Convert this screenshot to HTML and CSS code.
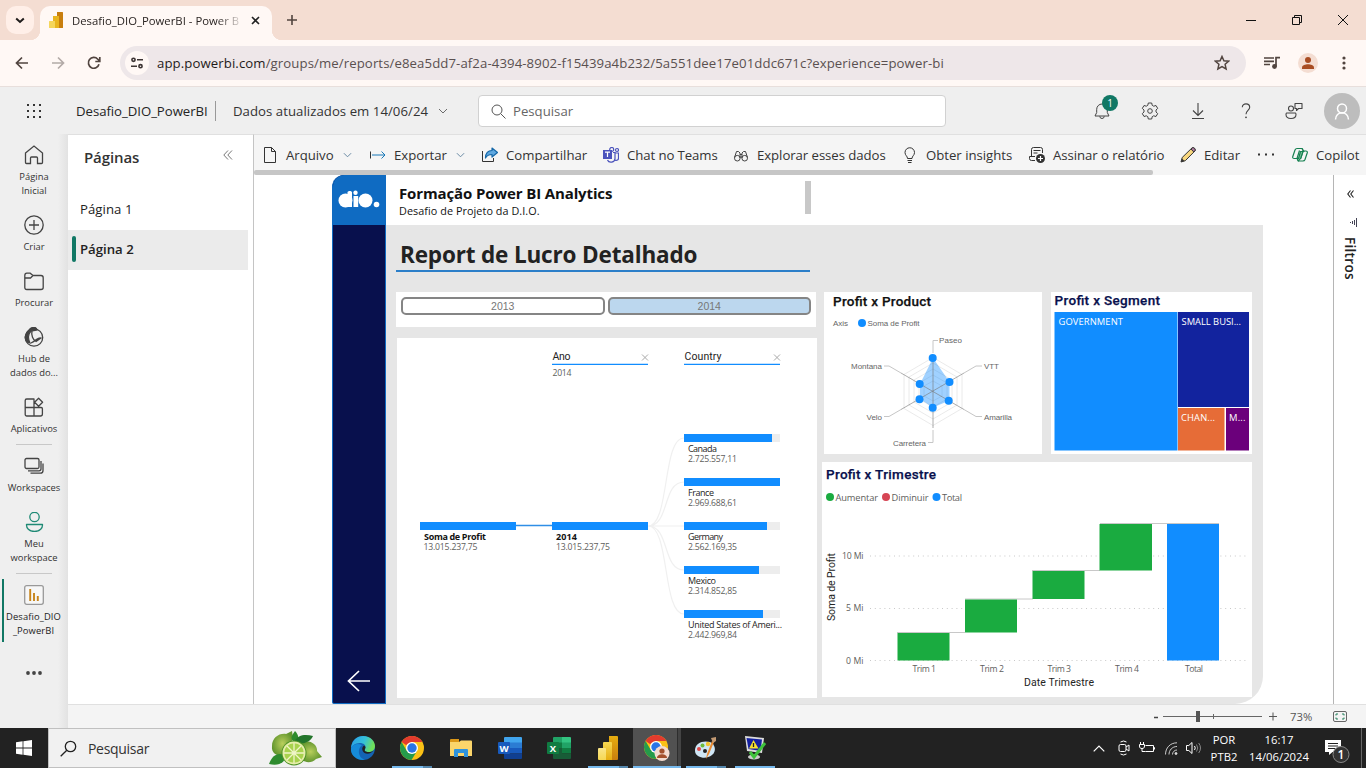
FILE: index.html
```html
<!DOCTYPE html>
<html lang="pt-BR">
<head>
<meta charset="utf-8">
<title>Desafio_DIO_PowerBI - Power BI</title>
<link rel="stylesheet" href="styles.css">
</head>
<body>
<svg class="defs" width="0" height="0">
  <defs>
    <linearGradient id="gold1" x1="0" y1="0" x2="0" y2="1"><stop offset="0" stop-color="#e6ad10"/><stop offset="1" stop-color="#c87e0e"/></linearGradient>
    <linearGradient id="gold2" x1="0" y1="0" x2="0" y2="1"><stop offset="0" stop-color="#f6d751"/><stop offset="1" stop-color="#e6ad10"/></linearGradient>
    <linearGradient id="gold3" x1="0" y1="0" x2="0" y2="1"><stop offset="0" stop-color="#f9e589"/><stop offset="1" stop-color="#f6d751"/></linearGradient>
    <linearGradient id="edgeTop" x1="0" y1="0" x2="1" y2="0.3"><stop offset="0" stop-color="#2a9ce8"/><stop offset="0.6" stop-color="#35c1d8"/><stop offset="1" stop-color="#6fe05a"/></linearGradient>
    <radialGradient id="lime"><stop offset="0" stop-color="#b9cf5c"/><stop offset="1" stop-color="#63962f"/></radialGradient>
    <symbol id="pbi" viewBox="0 0 20 24">
      <path d="M11 0h8a1 1 0 0 1 1 1v22a1 1 0 0 1-1 1h-8z" fill="url(#gold1)"/>
      <path d="M6 6h7a1 1 0 0 1 1 1v17H5V7a1 1 0 0 1 1-1z" fill="url(#gold2)"/>
      <path d="M1 12h6a1 1 0 0 1 1 1v11H1a1 1 0 0 1-1-1V13a1 1 0 0 1 1-1z" fill="url(#gold3)"/>
    </symbol>
    <symbol id="chrome" viewBox="0 0 24 24">
      <circle cx="12" cy="12" r="12" fill="#fbc116"/>
      <path d="M1.6 6A12 12 0 0 0 11.500 24L17 15 12 12 6.800 15z" fill="#259b4b"/>
      <path d="M1.6 6A12 12 0 0 1 22.400 6H12L6 9z" fill="#e33b2e"/>
      <circle cx="12" cy="12" r="6" fill="#fff"/><circle cx="12" cy="12" r="4.700" fill="#2a75e6"/>
    </symbol>
    <symbol id="chev" viewBox="0 0 10 6"><path d="M1 1l4 4 4-4" fill="none" stroke="#6b6b6b"/></symbol>
    <symbol id="chevBlue" viewBox="0 0 10 6"><path d="M1 1l4 4 4-4" fill="none" stroke="#5b7f9c"/></symbol>
  </defs>
</svg>

<header class="tabstrip">
  <button class="tab-search"><svg width="10" height="7" viewBox="0 0 10 7"><path d="M1.200 1.500L5 5l3.800-3.500" fill="none" stroke="#1f1b1a" stroke-width="2"/></svg></button>
  <div class="tab">
    <svg class="tab-icon" width="14" height="16" viewBox="0 0 14 16"><path d="M8 0h5.500a.5.500 0 0 1 .5.500v15a.5.500 0 0 1-.5.500H8z" fill="#c87e0e"/><path d="M4 4h6v12H4z" fill="#e9b520"/><path d="M.5 9H6v7H.5a.5.500 0 0 1-.5-.5v-6A.5.500 0 0 1 .5 9z" fill="#f5d65c"/></svg>
    <span class="tab-title">Desafio_DIO_PowerBI - Power B</span>
    <svg class="tab-close" width="9" height="9" viewBox="0 0 9 9"><path d="M1 1l7 7M8 1L1 8" stroke="#222" stroke-width="1.600"/></svg>
  </div>
  <svg class="tab-new" width="12" height="12" viewBox="0 0 12 12"><path d="M6 1v10M1 6h10" stroke="#51443f" stroke-width="1.600"/></svg>
  <div class="window-buttons">
    <svg width="46" height="40" viewBox="0 0 46 40"><path d="M18 20.500h10" stroke="#111"/></svg>
    <svg width="46" height="40" viewBox="0 0 46 40"><path d="M18.500 17.500h7v7h-7zM20.500 17.500v-2h7v7h-2" fill="none" stroke="#111"/></svg>
    <svg width="46" height="40" viewBox="0 0 46 40"><path d="M18 15l10 10M28 15L18 25" stroke="#111"/></svg>
  </div>
</header>

<nav class="browserbar">
  <svg class="nav-btn" width="14" height="14" viewBox="0 0 14 14"><path d="M13 7H2M7 1.500L1.500 7 7 12.500" fill="none" stroke="#51443f" stroke-width="1.700"/></svg>
  <svg class="nav-btn" width="14" height="14" viewBox="0 0 14 14"><path d="M1 7h11M7 1.500L12.500 7 7 12.500" fill="none" stroke="#b3aaa7" stroke-width="1.700"/></svg>
  <svg class="nav-btn" width="14" height="14" viewBox="0 0 14 14"><path d="M12 8.300A5.400 5.400 0 1 1 10.800 3.200L12.500 5M12.800 1v4.500H8.300" fill="none" stroke="#51443f" stroke-width="1.700"/></svg>
  <div class="omnibox">
    <span class="site-info"><svg width="14" height="12" viewBox="0 0 14 12"><g fill="none" stroke="#3c3433" stroke-width="1.600"><circle cx="3.500" cy="2.800" r="1.600"/><path d="M7 2.800h6M1 9.200h6"/><circle cx="10.500" cy="9.200" r="1.600"/></g></svg></span>
    <span class="url"><b>app.powerbi.com</b>/groups/me/reports/e8ea5dd7-af2a-4394-8902-f15439a4b232/5a551dee17e01ddc671c?experience=power-bi</span>
    <svg class="star" width="16" height="16" viewBox="0 0 16 16"><path d="M8 1.500l1.900 4.300 4.700.4-3.500 3.100 1 4.600L8 11.500l-4.100 2.400 1-4.600-3.500-3.100 4.700-.4z" fill="none" stroke="#51443f" stroke-width="1.500"/></svg>
  </div>
  <svg class="media" width="16" height="14" viewBox="0 0 16 14"><g fill="none" stroke="#51443f" stroke-width="1.700"><path d="M0 2h10M0 5.300h10M0 8.500h6M12 10.500V1.700h4"/></g><circle cx="10.500" cy="10.500" r="2.400" fill="#51443f"/></svg>
  <svg class="profile" width="20" height="20" viewBox="0 0 20 20"><circle cx="10" cy="10" r="10" fill="#f4ddd2"/><circle cx="10" cy="7" r="3" fill="#a84c22"/><path d="M4 16v-1.500c0-2.200 3.500-3.300 6-3.300s6 1.100 6 3.300V16z" fill="#a84c22"/></svg>
  <svg class="kebab" width="4" height="14" viewBox="0 0 4 14" fill="#51443f"><circle cx="2" cy="2" r="1.600"/><circle cx="2" cy="7" r="1.600"/><circle cx="2" cy="12" r="1.600"/></svg>
</nav>

<header class="appbar">
  <svg class="waffle" width="16" height="16" viewBox="0 0 16 16" fill="#333"><path d="M1 1h2v2H1zM7 1h2v2H7zM13 1h2v2h-2zM1 7h2v2H1zM7 7h2v2H7zM13 7h2v2h-2zM1 13h2v2H1zM7 13h2v2H7zM13 13h2v2h-2z"/></svg>
  <span class="report-name">Desafio_DIO_PowerBI</span>
  <span class="updated">Dados atualizados em 14/06/24</span>
  <svg width="10" height="6"><use href="#chev"/></svg>
  <div class="searchbox">
    <svg width="15" height="15" viewBox="0 0 15 15"><circle cx="6" cy="6" r="5" fill="none" stroke="#555"/><path d="M9.700 9.700L14.500 14.500" stroke="#555"/></svg>
    <span>Pesquisar</span>
  </div>
  <div class="app-actions">
    <span class="action"><svg width="16" height="17" viewBox="0 0 16 17"><path d="M1 13h14l-1.700-3.500V6.300a5.300 5.300 0 0 0-10.600 0v3.200zM5.800 13.300a2.200 2.200 0 0 0 4.400 0" fill="none" stroke="#444" stroke-linejoin="round"/></svg><i class="badge">1</i></span>
    <span class="action"><svg width="18" height="18" viewBox="0 0 18 18" fill="none" stroke="#444"><path d="M7.300 1h3.400l.5 2.300 1.500.9 2.300-.7 1.700 2.900-1.700 1.600v2l1.700 1.600-1.700 2.900-2.300-.7-1.500.9-.5 2.300H7.300l-.5-2.300-1.500-.9-2.300.7-1.700-2.900L3 10V8L1.300 6.400 3 3.500l2.300.7 1.500-.9z" stroke-linejoin="round"/><circle cx="9" cy="9" r="2.300"/></svg></span>
    <span class="action"><svg width="14" height="16" viewBox="0 0 14 16"><path d="M7 0v12M2 7.500l5 5 5-5M1 15.500h12" fill="none" stroke="#444" stroke-width="1.100"/></svg></span>
    <span class="action"><svg width="10" height="16" viewBox="0 0 10 16"><path d="M1.300 4.300C1.300-.3 8.700-.3 8.700 4.300c0 3-3.700 3.400-3.700 7" fill="none" stroke="#444" stroke-width="1.100"/><circle cx="5" cy="14.300" r=".9" fill="#444"/></svg></span>
    <span class="action"><svg width="18" height="18" viewBox="0 0 18 18" fill="none" stroke="#444" stroke-width="1.100"><circle cx="6" cy="6.500" r="2.500"/><path d="M1 12.500c0-2 1-1.500 5-1.500s5-.5 5 1.500c0 2.500-1.500 4-5 4s-5-1.500-5-4zM10 1.500h7v5h-3.500l-2 2v-2H10z" stroke-linejoin="round"/></svg></span>
    <span class="avatar"><svg width="16" height="17" viewBox="0 0 16 17" fill="none" stroke="#fff" stroke-width="1.500"><circle cx="8" cy="5.500" r="4.500"/><path d="M1.500 16.500c0-9 13-9 13 0"/></svg></span>
  </div>
</header>

<div class="workarea">
  <aside class="rail">
    <a class="rail-item"><svg width="20" height="20" viewBox="0 0 20 20"><path d="M1.500 8L10 1l8.500 7v9.500a1 1 0 0 1-1 1h-4V13a1 1 0 0 0-1-1h-5a1 1 0 0 0-1 1v5.500h-4a1 1 0 0 1-1-1z"/></svg><span>Página<br>Inicial</span></a>
    <a class="rail-item"><svg width="20" height="20" viewBox="0 0 20 20"><circle cx="10" cy="10" r="9.200"/><path d="M10 5v10M5 10h10"/></svg><span>Criar</span></a>
    <a class="rail-item"><svg width="20" height="20" viewBox="0 0 20 20"><path d="M.8 16.500v-12c0-1.500.7-2.300 2-2.300h3.400L9 4.500h8c1.500 0 2.200.8 2.200 2.200v9.800c0 1.300-.8 2-2.200 2H2.800c-1.300 0-2-.7-2-2zM1 7h5.500L9 4.500"/></svg><span>Procurar</span></a>
    <a class="rail-item"><svg width="20" height="20" viewBox="0 0 20 20"><circle cx="10" cy="10.500" r="8.700"/><path d="M5 3C1 6 0 12 3 15l3 1C4 12 4 7 7 4l6-1c-1-4-6-3-8 0z" fill="#444"/><path d="M8 4c-1 4 1 9 4 10.500l5-3.500c-3-1-4 2-10 5"/></svg><span>Hub de<br>dados do...</span></a>
    <a class="rail-item"><svg width="20" height="20" viewBox="0 0 20 20"><path d="M1.200 3.500a1.500 1.500 0 0 1 1.500-1.500H10v17H2.700a1.500 1.500 0 0 1-1.500-1.500zM1.200 10.500h16a1.200 1.200 0 0 1 1.200 1.200V17a2 2 0 0 1-2 2H10M14.600 1.200l4 4-4 4-4-4z" stroke-linejoin="round"/></svg><span>Aplicativos</span></a>
    <hr>
    <a class="rail-item"><svg width="20" height="20" viewBox="0 0 20 20"><rect x="1" y="2.500" width="14" height="10" rx="1.500"/><path d="M17 5v8c0 1-.5 1.800-2 1.800H4M19 7.500v7c0 1.800-1 2.700-2.500 2.700H6.500"/></svg><span>Workspaces</span></a>
    <a class="rail-item green"><svg width="20" height="20" viewBox="0 0 20 20"><circle cx="10.500" cy="5" r="4.700"/><path d="M2.500 12.500h16c.3 3.500-2.500 7-8 7s-8.300-3.500-8-7z" stroke-linejoin="round"/></svg><span>Meu<br>workspace</span></a>
    <hr>
    <a class="rail-item active"><svg width="20" height="20" viewBox="0 0 20 20"><rect x=".7" y=".7" width="18.600" height="18.600" rx="2" fill="#f7f7f7" stroke="#999"/><path d="M6.200 4v12M10 8v8M13.800 11v5" stroke="#c7851c" stroke-width="1.900"/></svg><span>Desafio_DIO<br>_PowerBI</span></a>
    <svg class="rail-more" width="18" height="4" viewBox="0 0 18 4" fill="#444"><circle cx="3" cy="2" r="1.900"/><circle cx="9" cy="2" r="1.900"/><circle cx="15" cy="2" r="1.900"/></svg>
  </aside>

  <div class="main">
    <div class="main-row">
      <section class="pages">
        <div class="pages-head"><h2>Páginas</h2><svg width="10" height="10" viewBox="0 0 10 10"><path d="M5 .5L.8 5 5 9.500M9 .5L4.800 5 9 9.500" fill="none" stroke="#777"/></svg></div>
        <div class="page">Página 1</div>
        <div class="page current">Página 2</div>
      </section>

      <section class="report-col">
        <div class="commands">
          <span class="cmd arquivo"><svg width="16" height="16" viewBox="0 0 16 16" fill="none" stroke="#333"><path d="M2.500.5h7l4 4v11h-11zM9.500.5v4h4"/></svg><span>Arquivo</span><svg width="9" height="6"><use href="#chevBlue"/></svg></span>
          <span class="cmd exportar"><svg width="16" height="16" viewBox="0 0 16 16" fill="none"><path d="M.5 4.500v7" stroke="#333"/><path d="M2 8h13M11.500 4.500L15 8l-3.500 3.500" stroke="#1878b8"/></svg><span>Exportar</span><svg width="9" height="6"><use href="#chevBlue"/></svg></span>
          <span class="cmd compartilhar"><svg width="16" height="16" viewBox="0 0 16 16"><path d="M.5 4v10.500h11V11" fill="none" stroke="#333"/><path d="M10 1l5.500 4.500L10 10V7.500c-3 0-5 .8-6.500 3.500C3.500 6 6 3.500 10 3.500z" fill="#5fa8e0" stroke="#1668a8" stroke-width="1.200" stroke-linejoin="round"/></svg><span>Compartilhar</span></span>
          <span class="cmd teams"><svg width="16" height="16" viewBox="0 0 16 16"><g fill="none" stroke="#4b53bc" stroke-width="1.200"><circle cx="8.700" cy="2.500" r="2"/><circle cx="14" cy="3" r="1.500"/><path d="M10 5.500h2v6c0 4-6 5-7.500 1.500M12.500 6h3v5c0 2-1.500 2.700-3.300 2.300"/></g><path d="M0 3h9v9H0z" fill="#4b53bc"/><path d="M2 5.200h5M4.500 5.200V10" stroke="#fff" stroke-width="1.200"/></svg><span>Chat no Teams</span></span>
          <span class="cmd explorar"><svg width="16" height="16" viewBox="0 0 16 16" fill="none" stroke="#444"><circle cx="4.300" cy="11.200" r="2.800"/><circle cx="11.700" cy="11.200" r="2.800"/><path d="M1.500 10.500L3.500 4.500h2L7 6v5M14.500 10.500l-2-6h-2L9 6v5M7 7.500h2M7 10h2"/></svg><span>Explorar esses dados</span></span>
          <span class="cmd insights"><svg width="16" height="16" viewBox="0 0 16 16" fill="none" stroke="#333"><path d="M5.500 11.500C5.500 9 3 8.500 3 5.500a4.700 4.700 0 0 1 9.500 0c0 3-2.500 3.500-2.500 6zM5.500 13.500H10M6 15.500h3.500"/></svg><span>Obter insights</span></span>
          <span class="cmd assinar"><svg width="16" height="16" viewBox="0 0 16 16" fill="none" stroke="#333"><path d="M6 13.500H2.500a2 2 0 0 1-2-2v-2h5.500M2.500 9.500v-7a2 2 0 0 1 2-2h7a2 2 0 0 1 2 2V6M4.500 3.500h7M4.500 6h4"/><circle cx="11.500" cy="11.500" r="4.500" fill="#333" stroke="none"/><path d="M11.500 9v5M9 11.500h5" stroke="#fff" stroke-width="1.200"/></svg><span>Assinar o relatório</span></span>
          <span class="cmd editar"><svg width="16" height="16" viewBox="0 0 16 16"><path d="M1 15l1.200-4.500L12 .9c1.800-1 3.900 1.200 3 3L5.300 13.700z" fill="#f8d77f" stroke="#333"/><path d="M11 2l1.500-1.200c1.800-.5 3 1.200 2.500 2.700L13.800 5z" fill="#b07ba0" stroke="#333"/><path d="M1 15l1-3.500L4.500 14z" fill="#333"/></svg><span>Editar</span></span>
          <span class="cmd more"><svg width="16" height="3" viewBox="0 0 16 3" fill="#333"><path d="M0 .5h2v2H0zM7 .5h2v2H7zM14 .5h2v2h-2z"/></svg></span>
          <span class="cmd copilot"><svg width="16" height="16" viewBox="0 0 16 16" fill="none" stroke="#168051" stroke-width="1.200" stroke-linejoin="round"><path d="M10 1.500H5c-1 0-1.600.6-2 1.500L.8 9.500c-.4 1.300.2 2 1.400 2H5L7.500 3.500M6 14h5c1 0 1.600-.5 2-1.500l2.200-6.500c.4-1.300-.2-2-1.400-2H11L8.500 12"/><path d="M10 1.500c1 .3 1 2.500 2 3H8.500L6.500 11.500H5c.7.300.3 2.500 1.500 2.500l2.300-3 2.400-7z" fill="#7bc49b"/></svg><span>Copilot</span></span>
        </div>
        <div class="hscroll"><i></i></div>

        <div class="stage-row">
          <div class="stage">
            <div class="report">
              <div class="report-nav">
                <div class="logo"><svg width="42" height="18" viewBox="0 0 42 18" fill="#fff"><circle cx="7.500" cy="10.500" r="7"/><path d="M9.500 2.500c0-2 4.500-2 4.500 0V17h-4.500z"/><circle cx="17.500" cy="2.700" r="2.200"/><path d="M15.500 6h4.700v11h-4.700z"/><circle cx="27.500" cy="10.500" r="7"/><circle cx="38.500" cy="14.500" r="2.800"/></svg></div>
                <svg class="back" width="24" height="22" viewBox="0 0 24 22"><path d="M23 11H1.500M12 1L1.500 11 12 21" fill="none" stroke="#fff" stroke-width="1.700"/></svg>
              </div>
              <div class="report-main">
                <div class="report-head">
                  <div><h3>Formação Power BI Analytics</h3><p>Desafio de Projeto da D.I.O.</p></div>
                  <i class="thumb"></i>
                </div>
                <div class="report-body">
                  <h1>Report de Lucro Detalhado</h1>
                  <div class="visuals">
                    <div class="left-col">
                      <div class="card slicer"><span class="chip">2013</span><span class="chip on">2014</span></div>
                      <div class="card tree">
                        <svg width="420" height="360" viewBox="397 338 420 360" class="viz">
                          <g class="links">
                            <path d="M648 526c22 0 14-88 36-88M648 526c22 0 14-44 36-44M648 526h36M648 526c22 0 14 44 36 44M648 526c22 0 14 88 36 88"/>
                          </g>
                          <path d="M516 525.500h36" stroke="#2f8ee6" stroke-width="1.500"/>
                          <g fill="#ededed"><path d="M684 434h96v8h-96zM684 522h96v8h-96zM684 566h96v8h-96zM684 610h96v8h-96z"/></g>
                          <g fill="#118dff"><path d="M420 522h96v8h-96zM552 522h96v8h-96zM684 434h88v8h-88zM684 478h96v8h-96zM684 522h83v8h-83zM684 566h75v8h-75zM684 610h79v8h-79zM552 363.700h96v1.300h-96zM684 363.700h96v1.300h-96z"/></g>
                          <path d="M642 354.500l6 6M648 354.500l-6 6M774 354.500l6 6M780 354.500l-6 6" stroke="#aaa"/>
                          <g class="din"><text x="552.500" y="360" textLength="18">Ano</text><text x="684.500" y="360" textLength="37">Country</text></g>
                          <g class="val"><text x="552.500" y="376" textLength="19">2014</text><text x="423.500" y="550" textLength="54">13.015.237,75</text><text x="556" y="550" textLength="54">13.015.237,75</text>
                          <text x="688" y="462" textLength="49">2.725.557,11</text><text x="688" y="506" textLength="49">2.969.688,61</text><text x="688" y="550" textLength="49">2.562.169,35</text><text x="688" y="594" textLength="49">2.314.852,85</text><text x="688" y="638" textLength="49">2.442.969,84</text></g>
                          <g class="key"><text x="688" y="452" textLength="29">Canada</text><text x="688" y="496" textLength="26">France</text><text x="688" y="540" textLength="35">Germany</text><text x="688" y="584" textLength="28">Mexico</text><text x="688" y="628" textLength="94">United States of Ameri...</text></g>
                          <g class="key strong"><text x="424" y="540" textLength="62">Soma de Profit</text><text x="556" y="540" textLength="21">2014</text></g>
                        </svg>
                      </div>
                    </div>
                    <div class="right-col">
                      <div class="top-row">
                        <div class="card">
                          <svg width="218" height="162" viewBox="824 292 218 162" class="viz">
                            <text class="title black" x="833" y="306" textLength="98">Profit x Product</text>
                            <g class="radar"><text x="833" y="326" textLength="15">Axis</text><text x="867.500" y="326" textLength="52">Soma de Profit</text><text x="939" y="343" textLength="23">Paseo</text><text x="984" y="369" textLength="15">VTT</text><text x="984" y="420" textLength="28">Amarilla</text><text x="893" y="446" textLength="33">Carretera</text><text x="866.500" y="420" textLength="15.500">Velo</text><text x="851" y="369" textLength="31">Montana</text></g>
                            <g fill="none" stroke="#e4e4e4" stroke-width=".8"><path d="M933 357.500l29 17v34l-29 17-29-17v-34zM933 363l24 14v28l-24 14-24-14v-28zM933 369l19 11v22l-19 11-19-11v-22zM933 375l14 8v16l-14 8-14-8v-16zM933 381l9 5v10l-9 5-9-5v-10z"/></g>
                            <path d="M933 358l16.500 24v18.500L933 407.500l-13-8.500v-15z" fill="#118dff" fill-opacity=".4"/>
                            <path d="M933 358v70M901 373l63 36.500M964 373l-63 36.500" stroke="#777" stroke-opacity=".6" fill="none"/>
                            <path d="M933 353v-12.500h5M964 373l12-7h6M964 409.500l12 7h6M933 430v12.500h-5M901 409.500l-12 7h-5M901 373l-12-7h-5" fill="none" stroke="#c6c6c6"/>
                            <g fill="#118dff"><circle cx="862" cy="323" r="4"/><circle cx="932.700" cy="358" r="4"/><circle cx="949.500" cy="382" r="4"/><circle cx="948.700" cy="400.700" r="4"/><circle cx="932.700" cy="407.700" r="4"/><circle cx="919.500" cy="399.200" r="4"/><circle cx="919.700" cy="384" r="4"/></g>
                          </svg>
                        </div>
                        <div class="card">
                          <svg width="201" height="162" viewBox="1051 292 201 162" class="viz">
                            <text class="title" x="1054.500" y="305" textLength="105.500">Profit x Segment</text>
                            <path d="M1054.500 312h123v138.500h-123z" fill="#118dff"/><path d="M1178 312h71v95h-71z" fill="#12239e"/><path d="M1178 408h46.500v42.500H1178z" fill="#e66c37"/><path d="M1226 408h23v42.500h-23z" fill="#6b007b"/>
                            <g class="tile"><text x="1058.500" y="325" textLength="64.500">GOVERNMENT</text><text x="1181.500" y="325" textLength="59.500">SMALL BUSI...</text><text x="1181" y="421" textLength="34">CHAN...</text><text x="1229" y="421" textLength="16.500">M...</text></g>
                          </svg>
                        </div>
                      </div>
                      <div class="card waterfall">
                        <svg width="430" height="235" viewBox="822 462 430 235" class="viz">
                          <text class="title" x="826" y="479" textLength="110">Profit x Trimestre</text>
                          <circle cx="830" cy="497" r="4" fill="#1aab40"/><circle cx="886" cy="497" r="4" fill="#d64554"/><circle cx="936.500" cy="497" r="4" fill="#118dff"/>
                          <g class="legend"><text x="835.500" y="501" textLength="42.500">Aumentar</text><text x="891.500" y="501" textLength="37">Diminuir</text><text x="942" y="501" textLength="20">Total</text></g>
                          <path d="M870 556h378M870 608.500h378M870 660.500h378" stroke="#c8c8c8" stroke-dasharray="1 3.800"/>
                          <path d="M897 632.500h68M965 599h68M1032 570.500h68M1100 523.500h119" stroke="#c8c8c8" fill="none"/>
                          <path d="M897.500 633h52v27.500h-52zM965 599.500h52v33h-52zM1032.500 571h52v28h-52zM1099.500 524h52.500v46.500h-52.500z" fill="#1aab40"/>
                          <path d="M1167 524h52v136.500h-52z" fill="#118dff"/>
                          <g class="val"><text x="842" y="559" textLength="21.500">10 Mi</text><text x="846" y="611" textLength="17.500">5 Mi</text><text x="846" y="664" textLength="17.500">0 Mi</text><text x="912.500" y="672" textLength="23.500">Trim 1</text><text x="980" y="672" textLength="24">Trim 2</text><text x="1047.500" y="672" textLength="23.500">Trim 3</text><text x="1115" y="672" textLength="24">Trim 4</text><text x="1185" y="672" textLength="18">Total</text></g>
                          <g class="din"><text x="1024" y="686" textLength="70">Date Trimestre</text><text transform="translate(835 621) rotate(-90)" textLength="68">Soma de Profit</text></g>
                        </svg>
                      </div>
                    </div>
                  </div>
                </div>
              </div>
            </div>
          </div>
          <aside class="filters">
            <svg width="7" height="8" viewBox="0 0 7 8"><path d="M3.500.5L.8 4l2.700 3.500M6.500.5L3.800 4l2.700 3.500" fill="none" stroke="#222" stroke-width="1.100"/></svg>
            <svg class="funnel" width="9" height="9" viewBox="0 0 9 9"><path d="M1.500 4v1M3.500 3v3M5.500 2v5M7.500 0v9" stroke="#445"/></svg>
            <span>Filtros</span>
          </aside>
        </div>
      </section>
    </div>
    <footer class="status">
      <svg width="124" height="14" viewBox="0 0 124 14"><path d="M1 7.500h4" stroke="#444" stroke-width="1.500"/><path d="M10 6.500h99M60.500 4v5" stroke="#666"/><path d="M43 1h4v11h-4z" fill="#555"/><path d="M116 6.500h8M120 2.500v8" stroke="#555"/></svg>
      <span>73%</span>
      <svg width="14" height="11" viewBox="0 0 14 11" fill="none" stroke="#666"><rect x=".5" y=".5" width="13" height="10" rx="1.500"/><path d="M5 3H3v1.500M9 3h2v1.500M5 8H3V6.500M9 8h2V6.500" stroke="#25815d"/></svg>
    </footer>
  </div>
</div>

<footer class="taskbar">
  <span class="start"><svg width="16" height="16" viewBox="0 0 16 16" fill="#fff"><path d="M0 2.200l6.600-.9v6.300H0zM7.400 1.200L16 0v7.600H7.400zM0 8.400h6.600v6.300L0 13.800zM7.400 8.400H16V16l-8.600-1.200z"/></svg></span>
  <div class="win-search">
    <svg width="17" height="17" viewBox="0 0 17 17" fill="none" stroke="#222" stroke-width="1.300"><circle cx="10.500" cy="6.500" r="5.200"/><path d="M6.800 10.200L.7 16.300"/></svg>
    <span>Pesquisar</span>
    <svg class="limes" width="54" height="36" viewBox="0 0 54 36"><path d="M4 16C4 8 11 3 18 4l6-3 1 7-6 18C10 27 3 24 4 16z" fill="url(#lime)"/><path d="M33 13c8-5 17 2 16 8l5 6-6 2c-6 6-16 3-17-5z" fill="url(#lime)"/><path d="M26 12c-5-4-1-8 1-11 4 4 5 9-1 11z" fill="#2e8b2e"/><path d="M26 12c4-8 12-8 19-6-3 7-12 9-19 6z" fill="#23752b"/><path d="M1 34c3-9 9-12 15-9 3 5-3 12-15 9z" fill="#2e8b2e"/><circle cx="26" cy="23" r="12.500" fill="#4f9427"/><circle cx="26" cy="23" r="11.500" fill="#e7edaa"/><circle cx="26" cy="23" r="9.800" fill="#a8d24d"/><path d="M26 13v20M16 23h20M19 16l14 14M33 16L19 30" stroke="#f0f5c8" stroke-width="1.300"/></svg>
  </div>
  <div class="apps">
    <span><svg width="24" height="24" viewBox="0 0 24 24"><circle cx="12" cy="12" r="12" fill="#1463b4"/><path d="M0 12C1 4 6 0 12 0c8 0 12 6 12 10 0 4-3 6-6.500 6-3 0-4.500-1-3.500-3 2-4-2-6-5-6-5 0-8 3-9 5z" fill="url(#edgeTop)"/><path d="M11 9c-5 4-4 13 3 14.800C6 25-1 19 0 12c2-4 7-5 11-3z" fill="#168bd9"/><path d="M14 13c-1 2 .5 3 3.500 3 2 0 3.500-.5 5-1.500-2 3.500-9 5-11 0-.8-2 0-4 1.500-5 1.500.8 2 2 1 3.500z" fill="#222"/></svg></span>
    <span class="run multi"><svg width="24" height="24"><use href="#chrome"/></svg></span>
    <span><svg width="22" height="18" viewBox="0 0 22 18"><path d="M0 1a1 1 0 0 1 1-1h8v5H0z" fill="#dc9818"/><path d="M0 3h9l2-1.500h10a1 1 0 0 1 1 1V17H0z" fill="#fbd56b"/><path d="M4 18v-7a1 1 0 0 1 1-1h12a1 1 0 0 1 1 1v7h-4v-4H8v4z" fill="#2f93dc"/></svg></span>
    <span><svg width="24" height="22" viewBox="0 0 24 22"><path d="M6 1a1 1 0 0 1 1-1h16a1 1 0 0 1 1 1v5H6z" fill="#41a5ee"/><path d="M6 5.500h18V11H6z" fill="#2b7cd3"/><path d="M6 11h18v5.500H6z" fill="#185abd"/><path d="M6 16.500h18V21a1 1 0 0 1-1 1H7a1 1 0 0 1-1-1z" fill="#103f91"/><rect y="5" width="12" height="12" rx="1" fill="#185abd"/><text x="6" y="14.500" class="glyph">W</text></svg></span>
    <span><svg width="24" height="22" viewBox="0 0 24 22"><path d="M6 1a1 1 0 0 1 1-1h8v6H6z" fill="#21a366"/><path d="M15 0h8a1 1 0 0 1 1 1v5h-9z" fill="#33c481"/><path d="M6 5.500h9V11H6z" fill="#107c41"/><path d="M15 5.500h9V11h-9z" fill="#21a366"/><path d="M15 11h9v5.500h-9z" fill="#107c41"/><path d="M6 11h9v5.500h9V21a1 1 0 0 1-1 1H7a1 1 0 0 1-1-1z" fill="#185c37"/><rect y="5" width="12" height="12" rx="1" fill="#107c41"/><text x="6" y="14.500" class="glyph">X</text></svg></span>
    <span class="run multi"><svg width="20" height="24"><use href="#pbi"/></svg></span>
    <span class="run focus"><svg width="26" height="26" viewBox="0 0 26 26"><use href="#chrome" width="24" height="24"/><circle cx="18" cy="18.500" r="7.500" fill="#f4dbd0"/><circle cx="18" cy="16" r="2.600" fill="#a4502c"/><path d="M13 23c0-5 10-5 10 0z" fill="#a4502c"/></svg></span>
    <span class="run multi"><svg width="24" height="24" viewBox="0 0 24 24"><path d="M1 14C1 7 9 4 16 6c5 2 7 9 2 13-4 3-9 4-14 1-3-2-3-4-3-6z" fill="#cfe6f5"/><circle cx="5" cy="13" r="2" fill="#e04848"/><circle cx="8.500" cy="9.500" r="2" fill="#6cbb3c"/><circle cx="14" cy="8" r="2.200" fill="#f2c230"/><circle cx="11" cy="15" r="2" fill="#222"/><path d="M20 6l-5 12-3 5 1-5 5-13z" fill="#e88b35"/><path d="M17 2l5-1v4l-3 2z" fill="#c39a73"/></svg></span>
    <span class="run"><svg width="24" height="24" viewBox="0 0 24 24"><ellipse cx="11" cy="21" rx="6" ry="2.500" fill="#ccc"/><path d="M2 0l19 2-2 15L4 15z" fill="#ddd"/><path d="M3.500 2l15.500 1.500-1.500 11.500L5.500 13z" fill="#1420a0"/><path d="M10.500 4l5 8.500H6z" fill="#f7e22e"/><path d="M10.500 7v4" stroke="#222" stroke-width="1.300"/><path d="M7 16l4 5L22 7" fill="none" stroke="#3fc23c" stroke-width="3"/></svg></span>
  </div>
  <div class="tray">
    <svg width="12" height="7" viewBox="0 0 12 7"><path d="M.7 6.300L6 1l5.300 5.300" fill="none" stroke="#fff" stroke-width="1.200"/></svg>
    <svg class="t2" width="12" height="16" viewBox="0 0 12 16" fill="none" stroke="#fff"><rect x="1" y="4.500" width="7" height="7" rx="1.500"/><path d="M8 7l3-2v6L8 9M2.500 2q3-2 6 0M2.500 14q3 2 6 0"/></svg>
    <svg class="t3" width="16" height="12" viewBox="0 0 16 12" fill="none" stroke="#fff"><path d="M6.500 3.500h8v6h-8M14.500 5.500h1v2M1.500 0v2.500M4.500 0v2.500M.5 2.500h5v1.500c0 2-1 2.500-2.500 2.500S.5 6 .5 4zM3 6.500v3h3.500"/></svg>
    <svg class="t4" width="13" height="13" viewBox="0 0 13 13" fill="none" stroke="#ccc"><path d="M.5 12.500C.5 6 5 .8 12 .8M4 12.500C4 8.500 7 4.500 12 4.500M7.500 12.500c0-2.500 2-4.500 4.500-4.500"/><circle cx="11" cy="11.500" r="1" fill="#fff"/></svg>
    <svg class="t5" width="16" height="14" viewBox="0 0 16 14" fill="none" stroke="#fff"><path d="M.5 4.500h2.300L6 1.500v11L2.800 9.500H.5zM8.500 5q1.500 2 0 4"/><path d="M10.500 3.500q2.500 3.500 0 7M12.700 2q3.600 5 0 10" stroke="#888"/></svg>
    <div class="lang">POR<br>PTB2</div>
    <div class="clock">16:17<br>14/06/2024</div>
    <div class="notif"><svg width="26" height="26" viewBox="0 0 26 26"><path d="M1 2h16v12H8.500L5 17v-3H1z" fill="#fff"/><path d="M4 5.500h10M4 8h10M4 10.500h7" stroke="#222"/><circle cx="17" cy="16.500" r="8" fill="#333" stroke="#888"/><text x="17" y="20.500">1</text></svg></div>
  </div>
</footer>
</body>
</html>
```

FILE: styles.css
```css
* { box-sizing: border-box; }
body { margin: 0; width: 1366px; height: 768px; overflow: hidden; display: flex; flex-direction: column; background: #fff; color: #333; font-family: "Open Sans", "Noto Sans", sans-serif; font-size: 13.2px; }
svg { display: block; flex: none; }
h1, h2, h3, p { margin: 0; }
span { white-space: nowrap; }
.defs { position: absolute; }

.tabstrip { height: 40px; flex: none; display: flex; background: #f4ddd2; }
.tab-search { width: 28px; height: 28px; margin: 6px 6px 0; border: 0; border-radius: 10px; background: #ffefe8; display: grid; place-items: center; padding: 0; }
.tab { position: relative; width: 232px; height: 34px; margin-top: 6px; border-radius: 10px 10px 0 0; background: #fff8f5; display: flex; align-items: center; padding: 0 12px 6px 9px; color: #2a2422; }
.tab::after, .tab::before { content: ""; position: absolute; bottom: 0; width: 10px; height: 10px; }
.tab::after { left: 100%; background: radial-gradient(circle at 100% 0, transparent 10px, #fff8f5 10.500px); }
.tab::before { right: 100%; background: radial-gradient(circle at 0 0, transparent 10px, #fff8f5 10.500px); }
.tab-icon { margin-right: 9px; }
.tab-title { width: 168px; font-size: 11.3px; letter-spacing: .02px; -webkit-mask-image: linear-gradient(90deg, #000 145px, transparent 172px); }
.tab-close { margin-left: auto; }
.tab-new { margin: 14px 0 0 14px; }
.window-buttons { margin-left: auto; display: flex; }

.browserbar { height: 47px; flex: none; display: flex; align-items: center; background: #fff8f5; border-bottom: 1px solid #e8dfdc; padding: 0 20px 0 15px; }
.nav-btn { margin-right: 22px; }
.nav-btn + .nav-btn + .nav-btn { margin-right: 19px; }
.omnibox { width: 1126px; height: 34px; border-radius: 17px; background: #eee7e9; display: flex; align-items: center; padding: 0 16px 0 5px; }
.site-info { width: 24px; height: 24px; border-radius: 50%; background: #fff8f5; display: grid; place-items: center; margin-right: 8px; }
.url { color: #5a5050; font-size: 13.2px; letter-spacing: .092px; }
.url b { font-weight: 400; color: #1f1b1a; }
.star { margin-left: auto; }
.media { margin-left: 18px; }
.profile { margin-left: 18px; }
.kebab { margin-left: auto; }

.appbar { height: 47px; flex: none; display: flex; align-items: center; background: #efefef; padding: 1px 0 0 26px; }
.waffle { margin-right: 34px; }
.report-name { width: 140px; padding-right: 8px; border-right: 1px solid #999; color: #242424; line-height: 20px; letter-spacing: -.04px; }
.updated { margin-left: 17px; width: 205px; letter-spacing: .04px; }
.searchbox { margin-left: 30px; width: 468px; height: 32px; border: 1px solid #d1d1d1; border-radius: 4px; background: #fff; display: flex; align-items: center; gap: 7px; padding-left: 12px; color: #666; }
.app-actions { margin-left: auto; display: flex; align-items: center; }
.action { position: relative; width: 48px; height: 46px; display: grid; place-items: center; }
.badge { position: absolute; left: 24px; top: 7px; width: 16px; height: 16px; border-radius: 50%; background: #117865; color: #fff; font: 10px/16px "Open Sans", sans-serif; text-align: center; }
.avatar { width: 36px; height: 36px; margin: 0 6px; border-radius: 50%; background: #bdbdbd; display: grid; place-items: center; }

.workarea { flex: 1; min-height: 0; display: flex; }
.rail { width: 68px; flex: none; background: linear-gradient(90deg, #efefef 58px, #e2e2e2); display: flex; flex-direction: column; padding-top: 11px; }
.rail-item { display: flex; flex-direction: column; align-items: center; gap: 5px; margin-bottom: 17px; font-size: 9.4px; line-height: 14px; text-align: center; color: #333; }
.rail-item svg { fill: none; stroke: #444; stroke-width: 1.300; }
.rail-item.green svg { stroke: #1f8a75; }
.rail hr { width: 36px; height: 1px; border: 0; background: #c8c8c8; margin: -9px auto 11px 16px; }
.rail-item.active { border-left: 2px solid #117865; margin: -6px 2px 0; padding: 6px 3px 4px 0; color: #222; letter-spacing: .1px; }
.rail-more { margin: 29px 0 0 25px; }

.main { flex: 1; min-width: 0; display: flex; flex-direction: column; }
.main-row { flex: 1; min-height: 0; display: flex; }
.pages { width: 186px; flex: none; background: #fff; border-right: 1px solid #c4c4c4; border-top: 1px solid #e0e0e0; }
.pages-head { height: 40px; display: flex; align-items: center; justify-content: space-between; padding: 3px 20px 0 16px; margin-bottom: 15px; }
.pages-head svg { margin-top: -4px; }
.pages h2 { font-size: 15px; font-weight: 600; letter-spacing: -.1px; color: #333; }
.page { height: 40px; width: 180px; padding-left: 12px; line-height: 39px; color: #222; letter-spacing: .05px; }
.page.current { background: #ebebeb; display: flex; padding-left: 4px; font-weight: 600; letter-spacing: 0; }
.page.current::before { content: ""; width: 4px; height: 26px; margin: 6px 4px 0 0; border-radius: 2px; background: #117865; }

.report-col { flex: 1; min-width: 0; display: flex; flex-direction: column; }
.commands { height: 36px; flex: none; display: flex; align-items: center; background: #f5f5f5; border-top: 1px solid #e0e0e0; padding: 4px 0 0 8px; }
.cmd { display: flex; align-items: center; gap: 8px; flex: none; letter-spacing: -.02px; }
.cmd svg + span + svg { margin-left: 1px; }
.arquivo { width: 108px; } .exportar { width: 112px; } .compartilhar { width: 121px; }
.teams { width: 130px; letter-spacing: -.09px; } .explorar { width: 169px; letter-spacing: -.06px; } .insights { width: 127px; }
.assinar { width: 151px; letter-spacing: -.06px; } .editar { width: 78px; } .more { width: 34px; }
.hscroll { height: 5px; flex: none; background: #f5f5f5; }
.hscroll i { display: block; width: 899px; height: 5px; border-radius: 2px; background: #c6c6c6; }

.stage-row { flex: 1; min-height: 0; display: flex; }
.stage { width: 1079px; padding-left: 78px; }
.report { width: 931px; height: 528.5px; display: flex; }
.report-nav { width: 54px; border: 1px solid #0f6bc2; border-top: 0; border-radius: 12px 0 0 2px; background: #08104d; display: flex; flex-direction: column; justify-content: space-between; overflow: hidden; }
.logo { height: 50px; background: #0f6bc2; padding: 15px 0 0 5px; }
.back { margin: 0 0 11px 14px; }
.report-main { flex: 1; display: flex; flex-direction: column; }
.report-head { height: 50px; display: flex; color: #111; padding-left: 13px; }
.report-head > div { width: 406px; }
.report-head h3 { font-size: 15px; line-height: 20px; padding-top: 8px; letter-spacing: -.13px; }
.report-head p { font-size: 10.800px; line-height: 15px; letter-spacing: .07px; }
.thumb { width: 6px; height: 33px; margin-top: 6px; background: #c8c8c8; }
.report-body { flex: 1; background: #e6e6e6; border-radius: 0 0 28px 0; padding: 14px 11px 0 10px; }
.report-body h1 { width: 414px; height: 33px; padding-left: 4px; border-bottom: 2px solid #2c7fc9; font-size: 22.500px; line-height: 31px; letter-spacing: -.16px; color: #222; }
.visuals { display: flex; justify-content: space-between; margin-top: 20px; }
.left-col { width: 421px; display: flex; flex-direction: column; gap: 11px; }
.right-col { width: 430px; display: flex; flex-direction: column; gap: 8px; }
.top-row { display: flex; gap: 9px; padding-left: 2px; }
.card { background: #fff; }
.tree { margin-left: 1px; }
.slicer { height: 35px; width: 420px; padding: 5px 5px; display: flex; gap: 3px; }
.chip { flex: 1; height: 18px; border: 2px solid #858585; border-radius: 5px; font: 10.500px/14px "Liberation Sans", sans-serif; text-align: center; color: #777; }
.chip.on { background: #bcd7ee; }

.viz text { white-space: pre; }
.viz .links path { fill: none; stroke: #f0f0f0; stroke-width: 1.200; }
.viz .val { font-size: 8.700px; fill: #605e5c; }
.viz .key { font-size: 9px; fill: #252423; }
.viz .strong { font-weight: 700; fill: #111; }
.viz .din { font: 10.500px Roboto, sans-serif; fill: #252423; }
.viz .title { font: 500 13.500px Roboto, sans-serif; fill: #08104d; stroke: #08104d; stroke-width: .25px; }
.viz .black { fill: #111; stroke: #111; }
.viz .radar { font: 8px "Liberation Sans", sans-serif; fill: #666; }
.viz .tile { font-size: 9.400px; fill: #fff; }
.viz .legend { font-size: 9.300px; fill: #605e5c; }

.filters { width: 33px; border-left: 1px solid #b5b5b5; display: flex; flex-direction: column; align-items: center; padding-top: 15px; color: #222; }
.funnel { margin: 20px -7px 10px 0; }
.filters span { writing-mode: vertical-rl; font-size: 13.500px; font-weight: 600; line-height: 16px; letter-spacing: .3px; }

.status { height: 24px; flex: none; background: #f4f4f4; border-top: 1px solid #e0e0e0; display: flex; align-items: center; padding-left: 1085px; font-size: 11.300px; color: #555; }
.status span { margin-left: 13px; width: 43px; }

.taskbar { height: 40px; flex: none; background: #222; display: flex; color: #fff; }
.start { width: 48px; display: grid; place-items: center; }
.win-search { width: 288px; border: 1px solid #c0c0c0; background: #f1f1f1; display: flex; align-items: center; padding: 0 13px 0 11px; color: #333; font-size: 14px; }
.win-search span { margin-left: 11px; letter-spacing: -.3px; }
.limes { margin-left: auto; }
.apps { display: flex; padding-left: 2px; }
.apps span { width: 49px; height: 40px; display: grid; place-items: center; }
.apps .run { background: linear-gradient(#76b9ed, #76b9ed) 50% 100% / 40px 2px no-repeat; }
.apps .multi { background: linear-gradient(90deg, #76b9ed 31px, #5587ad 31px) 50% 100% / 40px 2px no-repeat; }
.apps .focus { background: linear-gradient(#76b9ed, #76b9ed) 1px 100% / 48px 2px no-repeat, linear-gradient(90deg, #222 1px, #515151 1px 45px, #2e2e2e 45px 46px, #444 46px); }
.glyph { font: 700 9.500px "Open Sans", sans-serif; fill: #fff; text-anchor: middle; }
.tray { margin-left: auto; display: flex; align-items: center; padding-right: 4px; font-size: 11.300px; line-height: 17px; text-align: center; }
.t2 { margin-left: 13px; } .t3 { margin-left: 9px; } .t4 { margin-left: 10px; } .t5 { margin-left: 8px; }
.lang { width: 28px; margin-left: 8px; }
.clock { width: 62px; margin-left: 10px; }
.notif { height: 40px; width: 52px; border-right: 1px solid #666; padding: 10px 0 0 14px; }
.notif text { font: 600 12px "Open Sans", sans-serif; fill: #fff; text-anchor: middle; }
```
